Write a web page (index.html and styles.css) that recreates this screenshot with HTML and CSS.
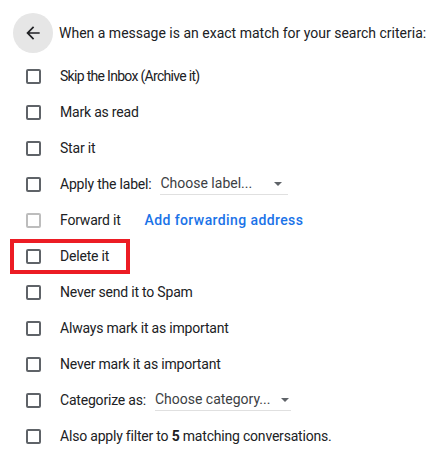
FILE: index.html
```html
<!DOCTYPE html>
<html>
<head>
<meta charset="utf-8">
<link rel="stylesheet" href="styles.css">
</head>
<body>
<div class="panel">
  <div class="header">
    <div class="back">
      <svg width="20" height="20" viewBox="0 0 24 24"><path d="M20 11H7.83l5.59-5.59L12 4l-8 8 8 8 1.41-1.41L7.83 13H20v-2z" fill="#202124"/></svg>
    </div>
    <div class="title">When a message is an exact match for your search criteria:</div>
  </div>
  <div class="rows">
    <div class="row"><span class="cb"></span><span class="label tight">Skip the Inbox (Archive it)</span></div>
    <div class="row"><span class="cb"></span><span class="label">Mark as read</span></div>
    <div class="row"><span class="cb"></span><span class="label">Star it</span></div>
    <div class="row"><span class="cb"></span><span class="label">Apply the label:</span><span class="select sel-label">Choose label...<span class="arrow"></span></span></div>
    <div class="row"><span class="cb disabled"></span><span class="label">Forward it</span><span class="link">Add forwarding address</span></div>
    <div class="row highlight"><span class="cb"></span><span class="label">Delete it</span></div>
    <div class="row"><span class="cb"></span><span class="label">Never send it to Spam</span></div>
    <div class="row"><span class="cb"></span><span class="label">Always mark it as important</span></div>
    <div class="row"><span class="cb"></span><span class="label">Never mark it as important</span></div>
    <div class="row"><span class="cb"></span><span class="label">Categorize as:</span><span class="select sel-cat">Choose category...<span class="arrow"></span></span></div>
    <div class="row"><span class="cb"></span><span class="label">Also apply filter to <b>5</b> matching conversations.</span></div>
  </div>
</div>
</body>
</html>
```
FILE: styles.css
```css
html, body {
  margin: 0;
  padding: 0;
  background: #ffffff;
}
body {
  font-family: Roboto, "Liberation Sans", Arial, sans-serif;
  font-size: 14px;
  color: #202124;
}
.panel {
  width: 436px;
  height: 453px;
  overflow: hidden;
}
.header {
  display: flex;
  align-items: center;
  padding: 13px 0 0 13px;
  height: 40px;
}
.back {
  width: 40px;
  height: 40px;
  border-radius: 50%;
  background: #e6e6e6;
  display: flex;
  align-items: center;
  justify-content: center;
  flex: none;
}
.back svg { display: block; }
.title {
  margin-left: 6px;
  white-space: nowrap;
}
.rows {
  display: flex;
  flex-direction: column;
  padding-top: 5px;
}
.row {
  position: relative;
  display: flex;
  align-items: center;
  height: 36px;
  padding-left: 26px;
  white-space: nowrap;
}
.cb {
  width: 11px;
  height: 11px;
  border: 2px solid #5f6368;
  border-radius: 2px;
  flex: none;
}
.cb.disabled {
  border-color: #bdbdbd;
}
.label {
  margin-left: 19px;
  letter-spacing: -0.2px;
}
.label.tight { letter-spacing: -0.7px; }
.label b { font-weight: 700; }
.select {
  position: relative;
  display: inline-block;
  margin-left: 9px;
  padding: 2px 0 3px;
  color: #3c4043;
  border-bottom: 1px solid #e0e0e0;
}
.sel-label { width: 128px; }
.sel-cat { width: 136px; }
.arrow {
  position: absolute;
  right: 6px;
  top: 9px;
  width: 0;
  height: 0;
  border-left: 4px solid transparent;
  border-right: 4px solid transparent;
  border-top: 4px solid #5f6368;
}
.sel-cat .arrow { right: 2px; }
.link {
  margin-left: 24px;
  color: #1a73e8;
  font-weight: 500;
  letter-spacing: 0.4px;
}
.highlight::after {
  content: "";
  position: absolute;
  left: 10px;
  top: 1px;
  width: 112px;
  height: 27px;
  border: 4px solid #ec1c24;
}
```
